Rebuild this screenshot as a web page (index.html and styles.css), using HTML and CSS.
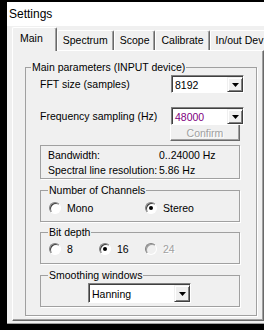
FILE: index.html
```html
<!DOCTYPE html>
<html lang="en">
<head>
  <meta charset="UTF-8" />
  <title>Settings</title>
  <link rel="stylesheet" href="styles.css">
</head>
<body>
  <div class="window">
    <div class="titlebar">Settings</div>
    <div class="client">
      <div class="tabs">
        <div class="tab active">Main</div>
        <div class="tab">Spectrum</div>
        <div class="tab">Scope</div>
        <div class="tab">Calibrate</div>
        <div class="tab">In/out Dev</div>
      </div>
      <div class="panel">
        <fieldset class="group">
          <legend>Main parameters (INPUT device)</legend>
          <div class="group-body main-body">
            <div class="field">
              <span>FFT size (samples)</span>
              <div class="combo"><span class="combo-text">8192</span><span class="combo-btn"><svg width="7" height="4" viewBox="0 0 7 4"><polygon points="0,0 7,0 3.5,4" fill="#000"/></svg></span></div>
            </div>
            <div class="field second">
              <span>Frequency sampling (Hz)</span>
              <div class="combo"><span class="combo-text purple">48000</span><span class="combo-btn"><svg width="7" height="4" viewBox="0 0 7 4"><polygon points="0,0 7,0 3.5,4" fill="#000"/></svg></span></div>
            </div>
            <button class="btn" disabled>Confirm</button>

            <div class="info">
              <span>Bandwidth:</span><span>0..24000 Hz</span>
              <span>Spectral line resolution:</span><span>5.86 Hz</span>
            </div>

            <fieldset class="group sub channels">
              <legend>Number of Channels</legend>
              <div class="group-body radios">
                <label class="radio"><span class="radio-btn"></span>Mono</label>
                <label class="radio col3"><span class="radio-btn checked"></span>Stereo</label>
              </div>
            </fieldset>

            <fieldset class="group sub bits">
              <legend>Bit depth</legend>
              <div class="group-body radios">
                <label class="radio"><span class="radio-btn"></span>8</label>
                <label class="radio"><span class="radio-btn checked"></span>16</label>
                <label class="radio disabled"><span class="radio-btn"></span>24</label>
              </div>
            </fieldset>

            <fieldset class="group sub smoothing">
              <legend>Smoothing windows</legend>
              <div class="group-body smooth-body">
                <div class="combo tall"><span class="combo-text">Hanning</span><span class="combo-btn"><svg width="7" height="4" viewBox="0 0 7 4"><polygon points="0,0 7,0 3.5,4" fill="#000"/></svg></span></div>
              </div>
            </fieldset>
          </div>
        </fieldset>
      </div>
    </div>
  </div>
</body>
</html>
```

FILE: styles.css
```css
body {
  margin: 0;
  width: 264px;
  height: 330px;
  overflow: hidden;
  background-color: #000;
  font-family: "Liberation Sans", Arial, sans-serif;
  font-size: 10.5px;
  color: #000;
}
.window {
  margin: 2px 0 0 7px;
  width: 270px;
  height: 321px;
  background-color: #f0f0f0;
  border-bottom: 1px solid #a0a0a0;
}
.titlebar {
  height: 24px;
  line-height: 24px;
  padding-left: 2px;
  background-color: #fff;
  font-size: 12px;
}
.client {
  padding: 2px 0 0 5px;
}
.tabs {
  display: flex;
  align-items: flex-end;
  height: 22px;
  position: relative;
  z-index: 1;
  white-space: nowrap;
}
.tab {
  height: 19px;
  line-height: 19px;
  padding: 0 5px;
  border: 1px solid;
  border-color: #fff #696969 transparent #fff;
  border-bottom: none;
  box-shadow: inset -1px 0 #a0a0a0;
  border-radius: 2px 2px 0 0;
}
.tab.active {
  height: 23px;
  line-height: 21px;
  margin-bottom: -1px;
  padding: 0 13px 0 7px;
  background-color: #f0f0f0;
}
.panel {
  box-sizing: border-box;
  width: 252px;
  height: 271px;
  padding: 10px 6px 0 12px;
  border: 1px solid;
  border-color: #fff #696969 #696969 #fff;
  box-shadow: inset -1px -1px #a0a0a0;
}
.group {
  margin: 0;
  padding: 0;
  min-width: 0;
  border: 1px solid #a0a0a0;
  box-shadow: 1px 1px #fff;
}
.group legend {
  margin-left: 5px;
  padding: 0 1px;
  line-height: 12px;
}
.group.sub legend {
  margin-left: 7px;
}
.main-body {
  padding: 2px 16px 8px 14px;
}
.field {
  display: flex;
  align-items: center;
  justify-content: space-between;
  margin-right: -4px;
}
.field.second {
  margin-top: 14px;
}
.combo {
  display: flex;
  box-sizing: border-box;
  width: 73px;
  height: 18px;
  border: 1px solid;
  border-color: #808080 #fff #fff #808080;
  box-shadow: inset 1px 1px #404040;
  background-color: #fff;
}
.combo.tall {
  width: 103px;
  height: 20px;
}
.combo-text {
  flex: 1;
  padding: 1px 0 0 3px;
  display: flex;
  align-items: center;
}
.purple {
  color: #800080;
}
.combo-btn {
  box-sizing: border-box;
  width: 16px;
  margin: 1px 0 0 0;
  display: flex;
  align-items: center;
  justify-content: center;
  background-color: #f0f0f0;
  border: 1px solid;
  border-color: #f0f0f0 #404040 #404040 #f0f0f0;
  box-shadow: inset 1px 1px #fff, inset -1px -1px #808080;
}
.btn {
  display: block;
  box-sizing: border-box;
  width: 70px;
  height: 17px;
  margin: -1px 0 0 130px;
  padding: 0;
  font: inherit;
  color: #a0a0a0;
  text-shadow: 1px 1px #fff;
  background-color: #f0f0f0;
  border: 1px solid;
  border-color: #fff #696969 #696969 #fff;
  box-shadow: inset -1px -1px #a0a0a0;
}
.info {
  display: grid;
  grid-template-columns: 111px auto;
  box-sizing: border-box;
  height: 34px;
  margin-top: 4px;
  padding: 3px 0 0 7px;
  line-height: 12px;
  border: 1px solid #a0a0a0;
  box-shadow: 1px 1px #fff;
}
.channels {
  margin-top: 5px;
}
.bits {
  margin-top: 4px;
}
.smoothing {
  margin-top: 5px;
}
.radios {
  display: grid;
  grid-template-columns: 50px 46px auto;
  height: 12px;
  padding: 6px 0 7px 8px;
}
.bits .radios {
  padding: 5px 0 8px 8px;
}
.radio {
  display: flex;
  align-items: center;
  gap: 6px;
  line-height: 12px;
}
.radio.col3 {
  grid-column: 3;
}
.radio.disabled {
  color: #a0a0a0;
  text-shadow: 1px 1px #fff;
}
.radio-btn {
  position: relative;
  box-sizing: border-box;
  width: 12px;
  height: 12px;
  border-radius: 50%;
  background-color: #fff;
  border: 1px solid;
  border-color: #808080 #fff #fff #808080;
  box-shadow: inset 1px 1px #404040;
}
.radio.disabled .radio-btn {
  background-color: #f0f0f0;
  box-shadow: inset 1px 1px #a0a0a0;
}
.radio-btn.checked::after {
  content: "";
  position: absolute;
  left: 3px;
  top: 3px;
  width: 4px;
  height: 4px;
  border-radius: 50%;
  background-color: #000;
}
.smooth-body {
  padding: 2px 0 3px 47px;
}
```
